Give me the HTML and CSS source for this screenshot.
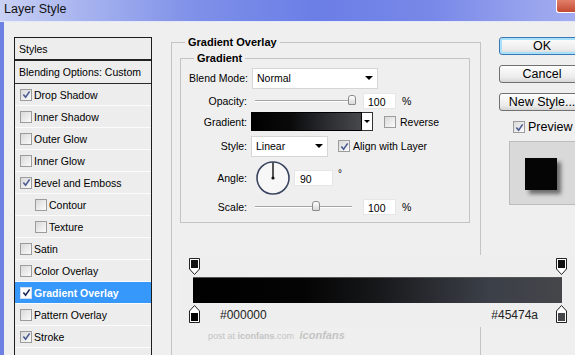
FILE: index.html
```html
<!DOCTYPE html>
<html>
<head>
    <meta charset="UTF-8">
    <title>Layer Style</title>
    <link rel="stylesheet" href="styles.css">
</head>
<body>
<div class="window">
    <div class="titlebar">
        <span class="title">Layer Style</span>
        <span class="close"></span>
    </div>
    <div class="dialog">
        <div class="styles">
            <div class="item head">Styles</div>
            <div class="item blend">Blending Options: Custom</div>
            <div class="item"><span class="chk on"><svg viewBox="0 0 10 10"><path d="M1.5 5 L4 8 L8.5 1.5"/></svg></span>Drop Shadow</div>
            <div class="item"><span class="chk"></span>Inner Shadow</div>
            <div class="item"><span class="chk"></span>Outer Glow</div>
            <div class="item"><span class="chk"></span>Inner Glow</div>
            <div class="item"><span class="chk on"><svg viewBox="0 0 10 10"><path d="M1.5 5 L4 8 L8.5 1.5"/></svg></span>Bevel and Emboss</div>
            <div class="item sub"><span class="chk"></span>Contour</div>
            <div class="item sub"><span class="chk"></span>Texture</div>
            <div class="item"><span class="chk"></span>Satin</div>
            <div class="item"><span class="chk"></span>Color Overlay</div>
            <div class="item sel"><span class="chk on"><svg viewBox="0 0 10 10"><path d="M1.5 5 L4 8 L8.5 1.5"/></svg></span>Gradient Overlay</div>
            <div class="item"><span class="chk"></span>Pattern Overlay</div>
            <div class="item"><span class="chk on"><svg viewBox="0 0 10 10"><path d="M1.5 5 L4 8 L8.5 1.5"/></svg></span>Stroke</div>
            <div class="item"></div>
        </div>

        <fieldset class="outer">
            <legend>Gradient Overlay</legend>
            <fieldset class="inner">
                <legend>Gradient</legend>
                <div class="row r-blend">
                    <span class="lbl">Blend Mode:</span>
                    <div class="select blendsel"><span>Normal</span><span class="arrow"></span></div>
                </div>
                <div class="row r-opacity">
                    <span class="lbl">Opacity:</span>
                    <div class="slider"><span class="thumb" style="left: 97px;"></span></div>
                    <div class="num">100</div>
                    <span class="unit">%</span>
                </div>
                <div class="row r-grad">
                    <span class="lbl">Gradient:</span>
                    <div class="swatch"></div>
                    <div class="drop"><span class="arrow"></span></div>
                    <span class="chk rev"></span><span>Reverse</span>
                </div>
                <div class="row r-style">
                    <span class="lbl">Style:</span>
                    <div class="select stylesel"><span>Linear</span><span class="arrow"></span></div>
                    <span class="chk on align"><svg viewBox="0 0 10 10"><path d="M1.5 5 L4 8 L8.5 1.5"/></svg></span><span>Align with Layer</span>
                </div>
                <div class="row r-angle">
                    <span class="lbl">Angle:</span>
                    <svg class="dial" viewBox="0 0 36 36">
                        <circle cx="18" cy="18" r="16" fill="#f7f7f7" stroke="#3a4560" stroke-width="1.6"/>
                        <line x1="18" y1="18" x2="18" y2="2.5" stroke="#111" stroke-width="1.4"/>
                        <circle cx="18" cy="18" r="1.6" fill="#111"/>
                    </svg>
                    <div class="num angle">90</div>
                    <span class="deg">°</span>
                </div>
                <div class="row r-scale">
                    <span class="lbl">Scale:</span>
                    <div class="slider"><span class="thumb" style="left: 61px;"></span></div>
                    <div class="num">100</div>
                    <span class="unit">%</span>
                </div>
            </fieldset>
        </fieldset>

        <div class="side">
            <button class="btn ok">OK</button>
            <button class="btn">Cancel</button>
            <button class="btn">New Style...</button>
            <div class="preview-row"><span class="chk on"><svg viewBox="0 0 10 10"><path d="M1.5 5 L4 8 L8.5 1.5"/></svg></span>Preview</div>
            <div class="preview"><div class="square"></div></div>
        </div>
    </div>

    <!-- pasted gradient editor strip -->
    <div class="editor">
        <div class="stops">
            <svg class="stop" viewBox="0 0 11 17"><path d="M0.5 0.5 H10.5 V11 L5.5 16.5 L0.5 11 Z" fill="#fff" stroke="#222"/><rect x="2" y="2" width="7" height="8" fill="#111"/></svg>
            <svg class="stop" viewBox="0 0 11 17"><path d="M0.5 0.5 H10.5 V11 L5.5 16.5 L0.5 11 Z" fill="#fff" stroke="#222"/><rect x="2" y="2" width="7" height="8" fill="#111"/></svg>
        </div>
        <div class="bar"></div>
        <div class="stops bottom">
            <svg class="stop" viewBox="0 0 11 18"><path d="M5.5 0.5 L10.5 6 V17.5 H0.5 V6 Z" fill="#fff" stroke="#222"/><rect x="2" y="8" width="7" height="8" fill="#000"/></svg>
            <span class="hex first">#000000</span>
            <span class="hex last">#45474a</span>
            <svg class="stop" viewBox="0 0 11 18"><path d="M5.5 0.5 L10.5 6 V17.5 H0.5 V6 Z" fill="#fff" stroke="#222"/><rect x="2" y="8" width="7" height="8" fill="#45474a"/></svg>
        </div>
    </div>
    <div class="credit">post at <b>iconfans</b>.com <i>iconfans</i></div>
</div>
</body>
</html>
```

FILE: styles.css
```css
*{
    margin: 0;
    padding: 0;
    box-sizing: border-box;
}
html,body{
    width: 575px;
    height: 355px;
    overflow: hidden;
}
body{
    background-color: #efefef;
    font-family: "Liberation Sans", Arial, sans-serif;
    font-size: 10.5px;
    color: #000;
}
.window{
    position: relative;
    height: 355px;
    overflow: hidden;
}
.titlebar{
    height: 22px;
    display: flex;
    align-items: flex-start;
    background: linear-gradient(to right, #c9d1f4 0%, #a8b4ef 14%, #7e90e8 34%, #6b7ee6 55%, #7888e8 75%, #97a3ed 92%, #a3acef 100%);
    border-bottom: 1px solid #e4e8fb;
}
.title{
    font-size: 12.5px;
    line-height: 18px;
    padding-left: 4px;
    color: #111;
}
.close{
    margin-left: auto;
    width: 19px;
    height: 13px;
    background: linear-gradient(#e2806a, #c34a31);
    border-left: 1px solid #fff;
    border-bottom: 1px solid #fff;
    border-radius: 0 0 0 3px;
}
.dialog{
    display: flex;
    align-items: flex-start;
    height: 333px;
    border-left: 4px solid #6d80e3;
}
.dialog > *{
    flex-shrink: 0;
}

/* styles list */
.styles{
    margin: 15px 0 0 10px;
    width: 138px;
    height: 330px;
    border: 1px solid #1c1c1c;
    border-bottom: 0;
    background-color: #ededed;
}
.item{
    height: 22px;
    display: flex;
    align-items: center;
    padding-left: 5px;
    border-bottom: 1px solid #fbfbfb;
    white-space: nowrap;
}
.head{
    height: 23px;
    padding-left: 4px;
    border-bottom: 2px solid #222;
}
.blend{
    height: 23px;
    padding-left: 4px;
    border-bottom: 1px solid #2a2a2a;
}
.sub{
    padding-left: 20px;
}
.sel{
    background-color: #3798fb;
    color: #fff;
    font-weight: bold;
}
.chk{
    width: 12px;
    height: 12px;
    margin-right: 2px;
    border: 1px solid #9c9c9c;
    background: linear-gradient(135deg, #d9d9d9, #fbfbfb);
    display: inline-flex;
    align-items: center;
    justify-content: center;
    flex-shrink: 0;
}
.sel .chk{
    background: #fff;
    border-color: #cfdcf0;
}
.chk svg{
    width: 9px;
    height: 9px;
}
.chk path{
    fill: none;
    stroke: #4b5b92;
    stroke-width: 1.8;
}
.sel .chk path{
    stroke: #1d2a5a;
}

/* fieldsets */
fieldset{
    border: 1px solid #c4c4c4;
    min-width: 0;
}
legend{
    font-weight: bold;
    font-size: 11px;
    line-height: 14px;
    padding: 0 3px;
    margin-left: 5px;
}
.outer{
    margin: 13px 0 0 19px;
    width: 310px;
    height: 360px;
    padding: 2px 10px 0 8px;
}
.inner{
    padding: 1px 8px 3px 8px;
}
.row{
    display: flex;
    align-items: center;
    white-space: nowrap;
}
.r-blend{ height: 24px; }
.r-opacity{ height: 22px; }
.r-grad{ height: 19px; }
.r-style{ height: 30px; }
.r-angle{ height: 34px; }
.r-scale{ height: 24px; }
.lbl{
    width: 58px;
    text-align: right;
    margin-right: 5px;
}
.select{
    height: 21px;
    background-color: #fff;
    border: 1px solid #d6d6d6;
    display: flex;
    align-items: center;
    justify-content: space-between;
    padding: 0 4px 0 4px;
}
.blendsel{ width: 126px; }
.stylesel{
    width: 77px;
    margin-left: -1px;
}
.arrow{
    width: 0;
    height: 0;
    border-left: 4px solid transparent;
    border-right: 4px solid transparent;
    border-top: 4px solid #000;
}
.slider{
    position: relative;
    width: 97px;
    height: 2px;
    margin-left: 3px;
    border-top: 1px solid #a4a4a4;
    border-bottom: 1px solid #fff;
}
.thumb{
    position: absolute;
    top: -6px;
    width: 8px;
    height: 10px;
    margin-left: -4px;
    border: 1px solid #8c8c8c;
    border-radius: 3px 3px 1px 1px;
    background: linear-gradient(#fff, #d8d8d8);
}
.num{
    width: 33px;
    height: 16px;
    margin-left: 11px;
    padding-left: 4px;
    line-height: 16px;
    background-color: #fff;
    border: 1px solid #e6e6e6;
}
.unit{
    margin-left: 6px;
}
.swatch{
    width: 111px;
    height: 19px;
    margin-left: -1px;
    border: 1px solid #000;
    background: linear-gradient(to right, #000 0%, #0a0a0b 35%, #2c2e32 70%, #46484c 100%);
}
.drop{
    width: 11px;
    height: 19px;
    border: 1px solid #333;
    border-left: 0;
    background-color: #fff;
    display: flex;
    align-items: center;
    justify-content: center;
}
.drop .arrow{
    border-width: 3px 3px 0 3px;
}
.rev{
    margin-left: 11px;
    margin-right: 4px;
}
.align{
    margin-left: 10px;
    margin-right: 3px;
}
.dial{
    width: 36px;
    height: 36px;
    margin-left: 3px;
}
.num.angle{
    width: 39px;
    margin-left: 3px;
    padding-left: 5px;
}
.deg{
    margin-left: 5px;
    align-self: flex-start;
    margin-top: 7px;
    font-size: 10px;
}

/* buttons column */
.side{
    margin: 15px 0 0 18px;
    width: 86px;
}
.btn{
    display: block;
    width: 86px;
    height: 18px;
    margin-bottom: 10px;
    font-family: "Liberation Sans", Arial, sans-serif;
    font-size: 12.5px;
    border: 1px solid #707070;
    border-radius: 3px;
    background: linear-gradient(#fdfdfd, #ececec 70%, #d6d6d6);
    color: #000;
}
.ok{
    border-color: #3c78b4;
    box-shadow: inset 0 0 0 2px #a6e0fb;
}
.preview-row{
    display: flex;
    align-items: center;
    height: 14px;
    margin: -1px 0 0 14px;
    font-size: 12.5px;
}
.preview-row .chk{
    margin-right: 3px;
}
.preview{
    margin: 7px 0 0 10px;
    width: 80px;
    height: 64px;
    background-color: #d9d9d9;
    border: 1px solid #bcbcbc;
    padding: 16px 0 0 15px;
}
.square{
    width: 32px;
    height: 32px;
    background-color: #050505;
    box-shadow: 4px 4px 4px rgba(0, 0, 0, 0.5);
}

/* gradient editor strip pasted over the dialog */
.editor{
    position: absolute;
    left: 182px;
    top: 255px;
    width: 393px;
    height: 72px;
    background-color: #eeeeee;
    padding: 3px 0 0 7px;
}
.stops{
    display: flex;
    align-items: flex-start;
    justify-content: space-between;
    width: 378px;
    height: 17px;
}
.stop{
    width: 11px;
    height: 17px;
}
.bottom{
    height: 18px;
    margin-top: 2px;
    align-items: center;
}
.bottom .stop{
    height: 18px;
}
.bar{
    width: 369px;
    height: 26px;
    margin: 2px 0 0 4px;
    border-top: 1px solid #555;
    background: linear-gradient(to right, #000 0%, #040404 30%, #17181a 50%, #2d3036 68%, #3b3f47 80%, #44464a 100%);
}
.hex{
    font-size: 12px;
    color: #222;
}
.first{
    margin: 2px auto 0 20px;
}
.last{
    margin: 2px 18px 0 0;
}
.credit{
    position: absolute;
    left: 208px;
    top: 329px;
    font-size: 9px;
    color: #c4c4c4;
}
.credit i{
    font-size: 11px;
    font-weight: bold;
    margin-left: 3px;
}
```
